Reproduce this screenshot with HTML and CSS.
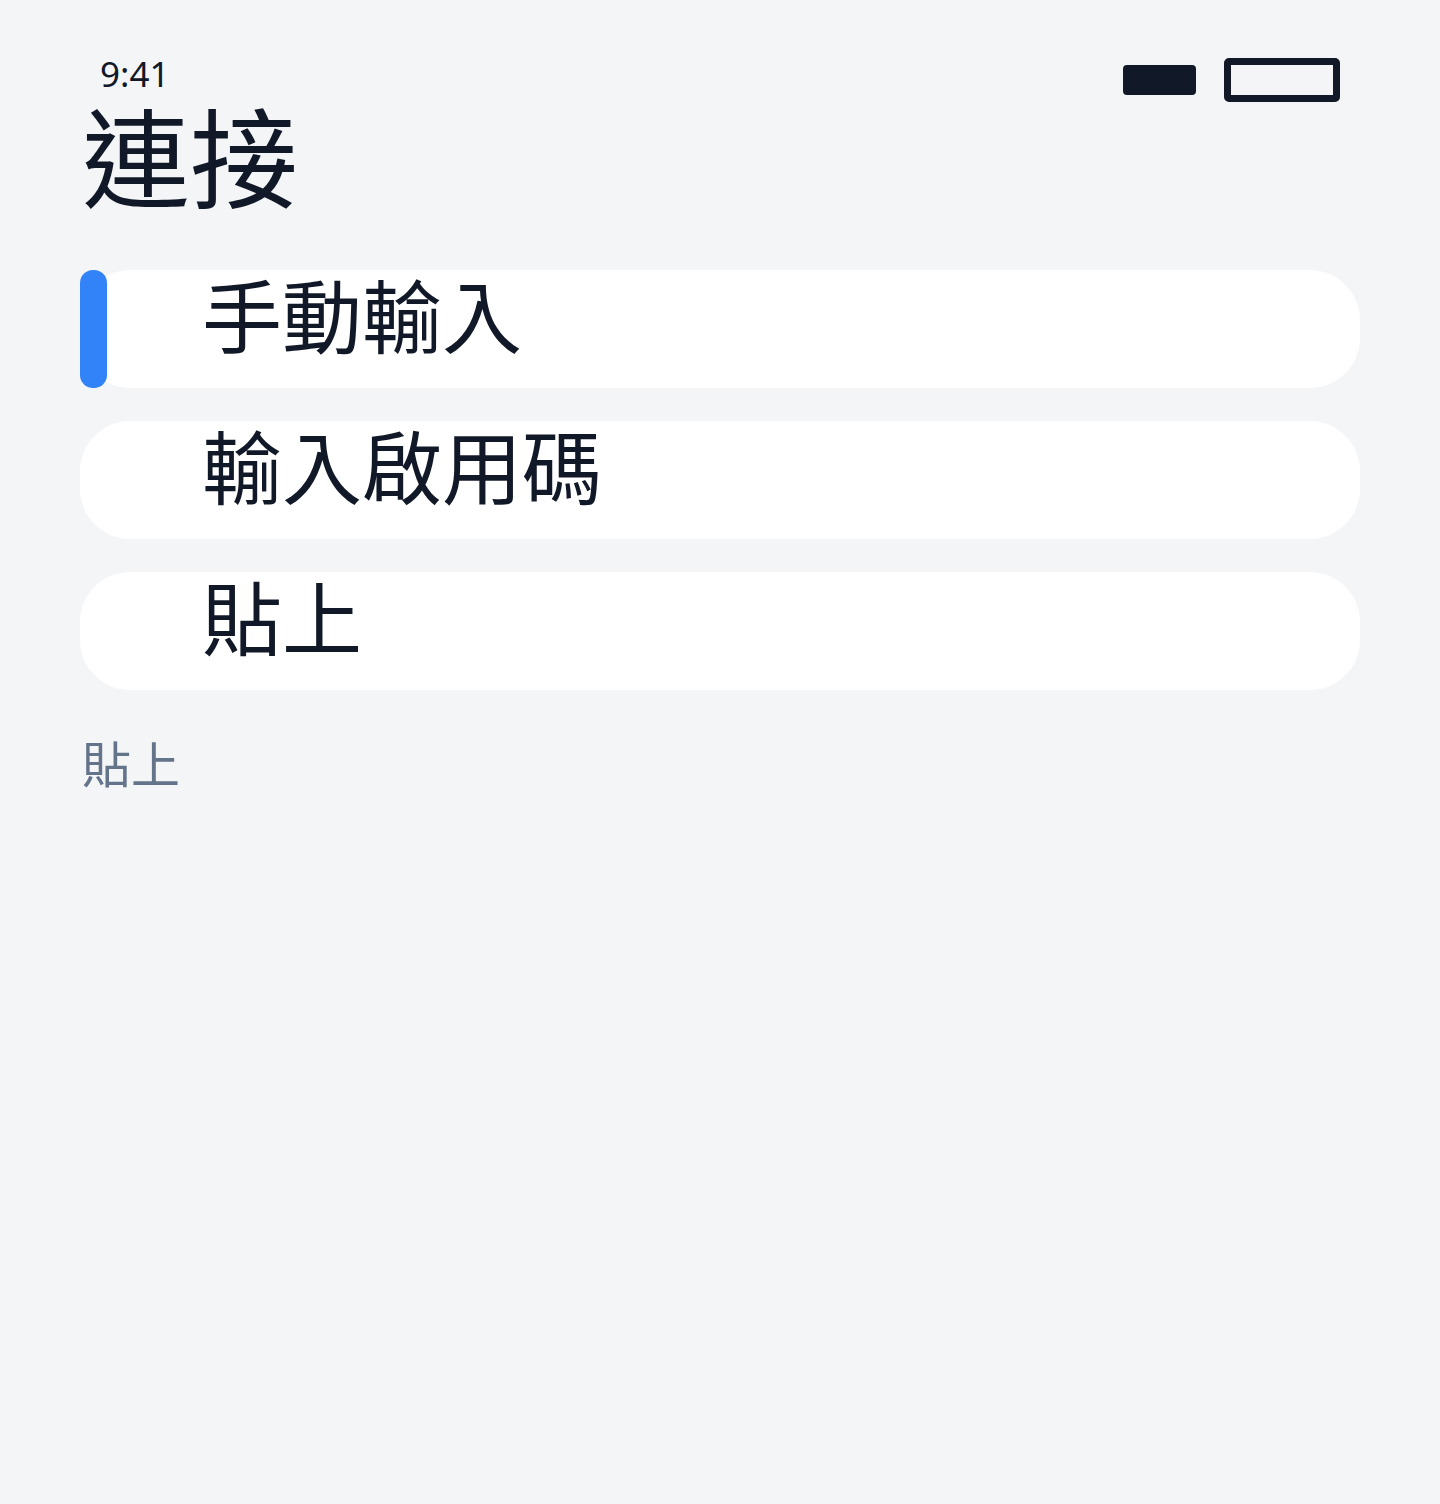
FILE: index.html
```html
<!DOCTYPE html>
<html lang="zh-Hant">
<head>
    <meta charset="UTF-8">
    <meta name="viewport" content="width=device-width, initial-scale=1.0">
    <title>連接</title>
    <link rel="stylesheet" href="styles.css">
</head>
<body>
    <div class="screen">
        <div class="status-bar">
            <span class="time">9:41</span>
            <div class="status-icons">
                <span class="signal"></span>
                <span class="battery"></span>
            </div>
        </div>

        <h1 class="title">連接</h1>

        <div class="menu">
            <div class="menu-item active">
                <span class="indicator"></span>
                <span class="label">手動輸入</span>
            </div>
            <div class="menu-item">
                <span class="label">輸入啟用碼</span>
            </div>
            <div class="menu-item">
                <span class="label">貼上</span>
            </div>
        </div>

        <p class="caption">貼上</p>
    </div>
</body>
</html>
```

FILE: styles.css
```css
body {
    margin: 0;
    padding: 0;
    background-color: #f4f5f7;
    color: #111827;
    font-family: "Noto Sans", "Noto Sans CJK TC", sans-serif;
    height: 1504px;
}
.screen {
    padding: 52px 80px 0 80px;
}
.status-bar {
    display: flex;
    justify-content: space-between;
    align-items: flex-start;
    height: 46px;
}
.time {
    font-size: 35px;
    line-height: 44px;
    margin-left: 20px;
    color: #111827;
}
.status-icons {
    display: flex;
    align-items: center;
    gap: 28px;
    margin-top: 6px;
    margin-right: 20px;
}
.signal {
    display: block;
    width: 73px;
    height: 30px;
    background-color: #111827;
    border-radius: 4px;
}
.battery {
    display: block;
    width: 102px;
    height: 30px;
    border: 7px solid #111827;
    border-radius: 5px;
}
.title {
    margin: 0 0 0 2px;
    font-family: "Noto Sans CJK TC", sans-serif;
    font-size: 108px;
    font-weight: 400;
    line-height: 110px;
}
.menu {
    display: flex;
    flex-direction: column;
    gap: 33px;
    margin-top: 62px;
}
.menu-item {
    position: relative;
    display: flex;
    align-items: flex-start;
    height: 118px;
    box-sizing: border-box;
    background-color: #fff;
    border-radius: 50px;
    padding: 2px 0 0 122px;
}
.menu-item .label {
    font-family: "Noto Sans CJK TC", sans-serif;
    font-size: 80px;
    font-weight: 400;
    line-height: 1;
}
.indicator {
    position: absolute;
    left: 0;
    top: 0;
    width: 27px;
    height: 118px;
    background-color: #3183f7;
    border-radius: 13px;
}
.caption {
    margin: 42px 0 0 2px;
    font-family: "Noto Sans CJK TC", sans-serif;
    font-size: 49px;
    line-height: 60px;
    color: #64748b;
}
```
